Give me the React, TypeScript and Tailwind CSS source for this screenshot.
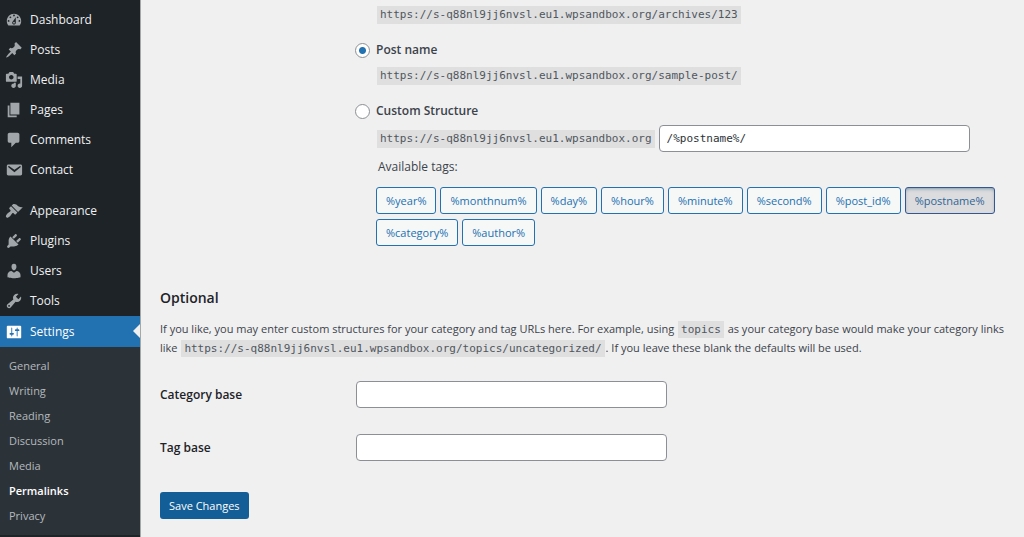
import { useState } from "react";
import clsx from "clsx";

const SITE_URL = "https://s-q88nl9jj6nvsl.eu1.wpsandbox.org";

interface MenuItem {
  label: string;
  icon: string;
}

const CONTENT_MENU: MenuItem[] = [
  {
    label: "Dashboard",
    icon: "M3.76 16h12.48c1.1-1.37 1.76-3.11 1.76-5 0-4.42-3.58-8-8-8s-8 3.58-8 8c0 1.89.66 3.63 1.76 5zM10 4c.55 0 1 .45 1 1s-.45 1-1 1-1-.45-1-1 .45-1 1-1zM6 6c.55 0 1 .45 1 1s-.45 1-1 1-1-.45-1-1 .45-1 1-1zm8 0c.55 0 1 .45 1 1s-.45 1-1 1-1-.45-1-1 .45-1 1-1zm-5.37 5.55L12 7v6c0 1.1-.9 2-2 2s-2-.9-2-2c0-.57.24-1.08.63-1.45zM4 10c.55 0 1 .45 1 1s-.45 1-1 1-1-.45-1-1 .45-1 1-1zm12 0c.55 0 1 .45 1 1s-.45 1-1 1-1-.45-1-1 .45-1 1-1zm-5 3c0-.55-.45-1-1-1s-1 .45-1 1 .45 1 1 1 1-.45 1-1z",
  },
  {
    label: "Posts",
    icon: "M10.44 3.02l1.82-1.82 6.36 6.35-1.83 1.82c-1.05-.68-2.48-.57-3.41.36l-.75.75c-.92.93-1.04 2.35-.35 3.41l-1.83 1.82-2.41-2.41-2.8 2.79c-.42.42-3.38 2.71-3.8 2.29s1.86-3.39 2.28-3.81l2.79-2.79L4.1 9.36l1.83-1.82c1.05.69 2.48.57 3.4-.36l.75-.75c.93-.92 1.05-2.35.36-3.41z",
  },
  {
    label: "Media",
    icon: "M13 11V4c0-.55-.45-1-1-1h-1.67L9 1H5L3.67 3H2c-.55 0-1 .45-1 1v7c0 .55.45 1 1 1h10c.55 0 1-.45 1-1zM7 4.5c1.38 0 2.5 1.12 2.5 2.5S8.38 9.5 7 9.5 4.5 8.38 4.5 7 5.62 4.5 7 4.5zM14 6h5v10.5c0 1.38-1.12 2.5-2.5 2.5S14 17.88 14 16.5s1.12-2.5 2.5-2.5c.17 0 .34.02.5.05V9h-3V6zm-4 8.05V13h2v3.5c0 1.38-1.12 2.5-2.5 2.5S7 17.88 7 16.5 8.12 14 9.5 14c.17 0 .34.02.5.05z",
  },
  { label: "Pages", icon: "M6 15V2h10v13H6zm-1 1h8v2H3V5h2v11z" },
  {
    label: "Comments",
    icon: "M5 2h9c1.1 0 2 .9 2 2v7c0 1.1-.9 2-2 2h-2l-5 5v-5H5c-1.1 0-2-.9-2-2V4c0-1.1.9-2 2-2z",
  },
  {
    label: "Contact",
    icon: "M3.87 4h13.25C18.37 4 19 4.59 19 5.79v8.42c0 1.19-.63 1.79-1.88 1.79H3.87c-1.25 0-1.88-.6-1.88-1.79V5.79c0-1.2.63-1.79 1.88-1.79zm6.62 8.6l6.74-5.53c.24-.2.43-.66.13-1.07-.29-.41-.82-.42-1.17-.17l-5.7 3.86L4.8 5.83c-.35-.25-.88-.24-1.17.17-.3.41-.11.87.13 1.07z",
  },
];

const ADMIN_MENU: MenuItem[] = [
  {
    label: "Appearance",
    icon: "M14.48 11.06L7.41 3.99l1.5-1.5c.5-.56 2.3-.47 3.51.32 1.21.8 1.43 1.28 2.91 2.1 1.18.64 2.45 1.26 4.45.85zm-.71.71L6.7 4.7 4.93 6.47c-.39.39-.39 1.02 0 1.41l1.06 1.06c.39.39.39 1.03 0 1.42-.6.6-1.43 1.11-2.21 1.69-.35.26-.7.53-1.01.84C1.43 14.23.4 16.08 1.4 17.07c.99 1 2.84-.03 4.18-1.36.31-.31.58-.66.85-1.02.57-.78 1.08-1.61 1.69-2.21.39-.39 1.02-.39 1.41 0l1.06 1.06c.39.39 1.02.39 1.41 0z",
  },
  {
    label: "Plugins",
    icon: "M13.11 4.36L9.87 7.6 8 5.73l3.24-3.24c.35-.34 1.05-.2 1.56.32.52.51.66 1.21.31 1.55zm-8 1.77l.91-1.12 9.01 9.01-1.19.84c-.71.71-2.63 1.16-3.82 1.16H6.14L4.9 17.26c-.59.59-1.54.59-2.12 0-.59-.58-.59-1.53 0-2.12l1.24-1.24v-3.88c0-1.13.4-3.19 1.09-3.89zm7.26 3.97l3.24-3.24c.34-.35 1.04-.21 1.55.31.52.51.66 1.21.31 1.55l-3.24 3.25z",
  },
  {
    label: "Users",
    icon: "M10 9.25c-2.27 0-2.73-3.44-2.73-3.44C7 4.02 7.82 2 9.97 2c2.16 0 2.98 2.02 2.71 3.81 0 0-.41 3.44-2.68 3.44zm0 2.57L12.72 10c2.39 0 4.52 2.33 4.52 4.53v2.49s-3.65 1.13-7.24 1.13c-3.65 0-7.24-1.13-7.24-1.13v-2.49c0-2.25 1.94-4.48 4.47-4.48z",
  },
  {
    label: "Tools",
    icon: "M16.68 9.77c-1.34 1.34-3.3 1.67-4.95.99l-5.41 6.52c-.99.99-2.59.99-3.58 0s-.99-2.59 0-3.57l6.52-5.42c-.68-1.65-.35-3.61.99-4.95 1.28-1.28 3.12-1.62 4.72-1.06l-2.89 2.89 2.82 2.82 2.86-2.87c.53 1.58.18 3.39-1.08 4.65zM3.81 16.21c.4.39 1.04.39 1.43 0 .4-.4.4-1.04 0-1.43-.39-.4-1.03-.4-1.43 0-.39.39-.39 1.03 0 1.43z",
  },
];

const SETTINGS_ICON =
  "M18 16V4c0-.55-.45-1-1-1H3c-.55 0-1 .45-1 1v12c0 .55.45 1 1 1h14c.55 0 1-.45 1-1zM8 11h1c.55 0 1 .45 1 1s-.45 1-1 1H8v1.5c0 .28-.22.5-.5.5s-.5-.22-.5-.5V13H6c-.55 0-1-.45-1-1s.45-1 1-1h1V5.5c0-.28.22-.5.5-.5s.5.22.5.5V11zm5-2h-1c-.55 0-1-.45-1-1s.45-1 1-1h1V5.5c0-.28.22-.5.5-.5s.5.22.5.5V7h1c.55 0 1 .45 1 1s-.45 1-1 1h-1v5.5c0 .28-.22.5-.5.5s-.5-.22-.5-.5V9z";

const SETTINGS_PAGES = ["General", "Writing", "Reading", "Discussion", "Media", "Permalinks", "Privacy"];

const TAGS = [
  "%year%",
  "%monthnum%",
  "%day%",
  "%hour%",
  "%minute%",
  "%second%",
  "%post_id%",
  "%postname%",
  "%category%",
  "%author%",
];

const MenuIcon = ({ path, className }: { path: string; className?: string }) => (
  <svg viewBox="0 0 20 20" fill="currentColor" aria-hidden="true" className={clsx("size-[18px] shrink-0", className)}>
    <path d={path} />
  </svg>
);

const MenuLink = ({ label, icon }: MenuItem) => (
  <li>
    <a href="#" className="flex h-[30px] items-center gap-[7px] pl-[5px] text-[#f0f0f1]">
      <MenuIcon path={icon} className="text-[#a1a6aa]" />
      {label}
    </a>
  </li>
);

const Sidebar = () => (
  <nav className="w-[141px] shrink-0 border-r border-[#a5a7a9] bg-[#1d2327] pt-[5px] text-[12px] leading-4">
    <ul>
      {CONTENT_MENU.map((item) => (
        <MenuLink key={item.label} {...item} />
      ))}
    </ul>
    <ul className="mt-[11px]">
      {ADMIN_MENU.map((item) => (
        <MenuLink key={item.label} {...item} />
      ))}
      <li>
        <a href="#" className="relative flex h-[31px] items-center gap-[7px] bg-[#2271b1] pl-[5px] text-white">
          <MenuIcon path={SETTINGS_ICON} />
          Settings
          {/* notch pointing at the open page */}
          <span className="absolute top-2 right-0 border-y-[7px] border-r-[7px] border-y-transparent border-r-[#f0f0f1]" />
        </a>
        <ul className="bg-[#2c3338] pt-[6px] pb-[7px] text-[11px]">
          {SETTINGS_PAGES.map((page) => (
            <li key={page}>
              <a
                href="#"
                className={clsx(
                  "flex h-[25px] items-center pl-[9px]",
                  page === "Permalinks" ? "font-semibold text-white" : "text-[#b4b9be]",
                )}
              >
                {page}
              </a>
            </li>
          ))}
        </ul>
      </li>
    </ul>
  </nav>
);

const Code = ({ children }: { children: React.ReactNode }) => (
  <code className="mx-px bg-[#dfdfe0] px-[3px] py-[2px] font-['DejaVu_Sans_Mono',monospace] text-[11px] leading-[14px] text-[#50575e]">
    {children}
  </code>
);

interface RadioRowProps {
  id: string;
  label: string;
  checked: boolean;
  onSelect: (id: string) => void;
}

const RadioRow = ({ id, label, checked, onSelect }: RadioRowProps) => (
  <div className="flex h-[18px] items-center gap-[6px]">
    <input
      type="radio"
      id={id}
      name="selection"
      checked={checked}
      onChange={() => onSelect(id)}
      className="size-[15px] appearance-none rounded-full border border-[#8c8f94] bg-white checked:bg-[radial-gradient(circle,#2271b1_3px,#fff_4px)]"
    />
    <label htmlFor={id} className="font-semibold">
      {label}
    </label>
  </div>
);

const inputClass = "h-[27px] w-[311px] rounded-[4px] border border-[#8c8f94] bg-white px-[7px] text-[#2c3338]";

const BaseField = ({ id, label }: { id: string; label: string }) => (
  <div className="flex items-center">
    <label htmlFor={id} className="w-[196px] font-semibold text-[#1d2327]">
      {label}
    </label>
    <input id={id} type="text" className={inputClass} />
  </div>
);

const App = () => {
  const [selected, setSelected] = useState("post-name");
  const [structure, setStructure] = useState("/%postname%/");

  const toggleTag = (tag: string) => {
    setSelected("custom");
    setStructure((prev) => (prev.includes(tag) ? prev.replace(`${tag}/`, "") : `${prev}${tag}/`));
  };

  return (
    <div className="flex min-h-screen bg-[#f0f0f1] font-['Open_Sans','Noto_Sans',sans-serif] text-[12px] leading-[18px] text-[#3c434a]">
      <Sidebar />
      <main className="min-w-0 flex-1 pt-[6px] pr-4 pl-[19px]">
        <form onSubmit={(e) => e.preventDefault()}>
          <div className="pl-[195px]">
            <div className="flex pl-[21px]">
              <Code>{SITE_URL}/archives/123</Code>
            </div>
            <div className="mt-[17px]">
              <RadioRow id="post-name" label="Post name" checked={selected === "post-name"} onSelect={setSelected} />
              <div className="mt-2 flex pl-[21px]">
                <Code>{SITE_URL}/sample-post/</Code>
              </div>
            </div>
            <div className="mt-[17px]">
              <RadioRow id="custom" label="Custom Structure" checked={selected === "custom"} onSelect={setSelected} />
              <div className="mt-[5px] flex items-center gap-[3px] pl-[21px]">
                <Code>{SITE_URL}</Code>
                <input
                  type="text"
                  aria-label="Custom structure"
                  value={structure}
                  onChange={(e) => setStructure(e.target.value)}
                  className={clsx(inputClass, "font-['DejaVu_Sans_Mono',monospace] text-[11px]")}
                />
              </div>
              <p className="mt-[6px] pl-[23px]">Available tags:</p>
              <ul className="mt-[11px] flex flex-wrap gap-x-1 gap-y-[5px] pl-[21px] text-[11px]">
                {TAGS.map((tag) => {
                  const active = structure.includes(tag);
                  return (
                    <li key={tag}>
                      <button
                        type="button"
                        aria-pressed={active}
                        onClick={() => toggleTag(tag)}
                        className={clsx(
                          "block h-[27px] rounded-[3px] border px-[9px]",
                          active
                            ? "border-[#34578f] bg-[#dcdcde] text-[#2f6596] shadow-[inset_0_2px_5px_-3px_#0a4b78]"
                            : "border-[#2271b1] bg-[#f6f7f7] text-[#2271b1]",
                        )}
                      >
                        {tag}
                      </button>
                    </li>
                  );
                })}
              </ul>
            </div>
          </div>

          <h2 className="mt-[42px] text-[14px] leading-5 font-semibold text-[#1d2327]">Optional</h2>
          <p className="mt-[11px] text-[11px] leading-[19px]">
            If you like, you may enter custom structures for your category and tag URLs here. For example, using{" "}
            <Code>topics</Code> as your category base would make your category links like{" "}
            <Code>{SITE_URL}/topics/uncategorized/</Code>. If you leave these blank the defaults will be used.
          </p>

          <div className="mt-6 flex flex-col gap-[26px]">
            <BaseField id="category-base" label="Category base" />
            <BaseField id="tag-base" label="Tag base" />
          </div>

          <button type="submit" className="mt-[31px] h-[27px] rounded-[3px] bg-[#135e96] px-[9px] text-[11px] text-white">
            Save Changes
          </button>
        </form>
      </main>
    </div>
  );
};

export default App;
